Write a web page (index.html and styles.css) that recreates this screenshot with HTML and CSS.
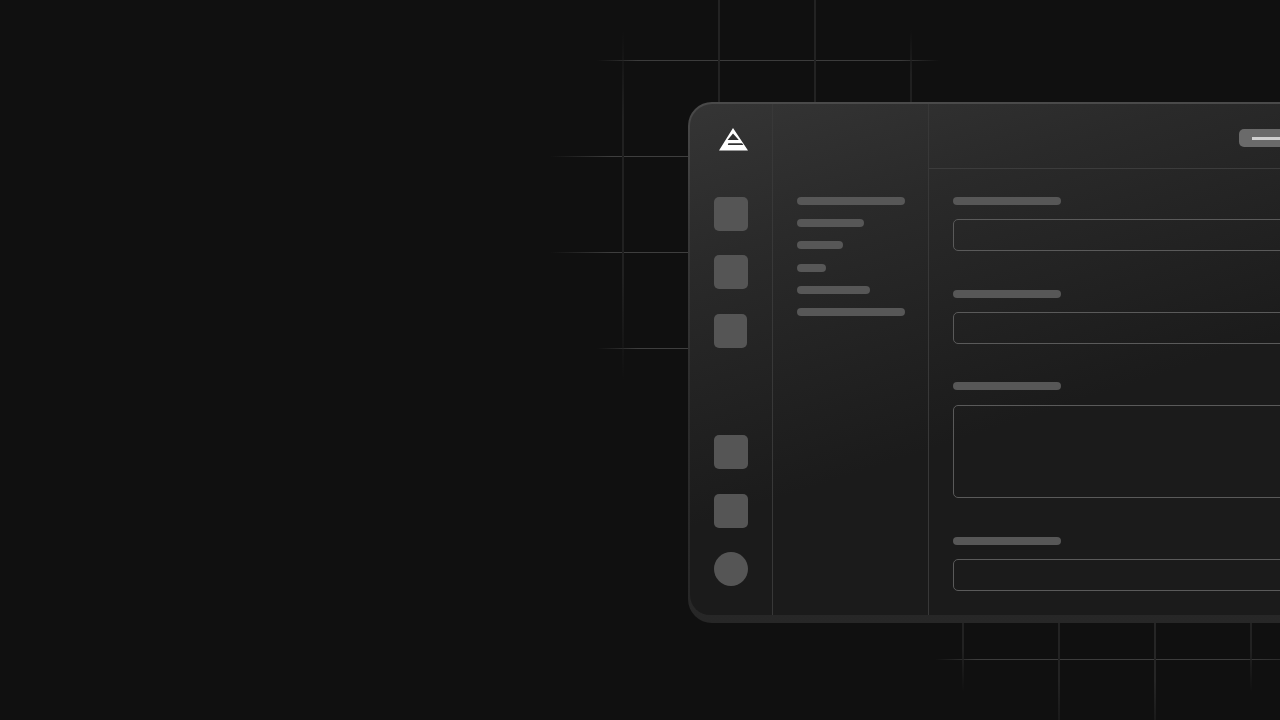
FILE: index.html
```html
<!DOCTYPE html>
<html lang="en">
<head>
<meta charset="utf-8">
<title>App window</title>
<link rel="stylesheet" href="styles.css">
</head>
<body>
<div class="lines" aria-hidden="true">
  <i class="h h60"></i><i class="h h156"></i><i class="h h252"></i><i class="h h348"></i><i class="h h659"></i>
  <i class="v v623"></i><i class="v v719"></i><i class="v v815"></i><i class="v v911"></i>
  <i class="v v963"></i><i class="v v1059"></i><i class="v v1155"></i><i class="v v1251"></i>
</div>
<div class="window">
  <div class="panel">
    <aside class="rail">
      <div class="logo">
        <svg width="30" height="24" viewBox="0 0 30 24"><path fill="#fff" fill-rule="evenodd" d="M14 1 29 23.5H0L14 1ZM14 6.5 8.6 13H19.8L14 6.5ZM9.4 16.2 8.8 18H24.4L23 16.2H9.4Z"/></svg>
      </div>
      <div class="rail-body">
        <div class="rail-group"><span class="tile"></span><span class="tile"></span><span class="tile narrow"></span></div>
        <div class="rail-group"><span class="tile"></span><span class="tile"></span><span class="tile round"></span></div>
      </div>
    </aside>
    <nav class="nav">
      <span class="bar w108"></span><span class="bar w67"></span><span class="bar w46"></span><span class="bar w29"></span><span class="bar w73"></span><span class="bar w108"></span>
    </nav>
    <main class="main">
      <header class="top"><div class="btn"><span class="btn-line"></span></div></header>
      <form class="form">
        <div class="field"><span class="bar w108"></span><div class="input"></div></div>
        <div class="field"><span class="bar w108"></span><div class="input"></div></div>
        <div class="field field-tall"><span class="bar w108"></span><div class="input tall"></div></div>
        <div class="field"><span class="bar w108"></span><div class="input"></div></div>
      </form>
    </main>
  </div>
</div>
</body>
</html>
```
FILE: styles.css
```css
* { box-sizing: border-box; }
html, body { height: 100%; margin: 0; overflow: hidden; }
body {
  position: relative;
  background: #101010;
  padding: 102px 0 0 688px;
}
.lines { position: absolute; inset: 0; }
.h, .v { position: absolute; display: block; }
.h { height: 1px; }
.v { width: 2px; }
.h60 { left: 597px; width: 343px; top: 60px; background: linear-gradient(90deg, transparent, #3c3c3c 12%, #3c3c3c 88%, transparent); }
.h156 { left: 550px; width: 138px; top: 156px; background: linear-gradient(90deg, transparent, #3e3e3e 45%); }
.h252 { left: 550px; width: 138px; top: 252px; background: linear-gradient(90deg, transparent, #3e3e3e 45%); }
.h348 { left: 597px; width: 91px; top: 348px; background: linear-gradient(90deg, transparent, #3e3e3e 45%); }
.h659 { left: 935px; width: 345px; top: 659px; background: linear-gradient(90deg, transparent, #3c3c3c 12%, #3c3c3c 88%, #2c2c2c); }
.v623 { left: 622px; top: 30px; height: 350px; background: linear-gradient(180deg, transparent, #212121 25%, #212121 70%, transparent); }
.v719 { left: 718px; top: 0; height: 104px; background: #232323; }
.v815 { left: 814px; top: 0; height: 104px; background: #232323; }
.v911 { left: 910px; top: 30px; height: 74px; background: linear-gradient(180deg, transparent, #202020 60%); }
.v963 { left: 962px; top: 620px; height: 72px; background: linear-gradient(180deg, #222 40%, transparent); }
.v1059 { left: 1058px; top: 620px; height: 100px; background: linear-gradient(180deg, #232323 60%, #1a1a1a); }
.v1155 { left: 1154px; top: 620px; height: 100px; background: linear-gradient(180deg, #262626 60%, #1a1a1a); }
.v1251 { left: 1250px; top: 620px; height: 72px; background: linear-gradient(180deg, #222 40%, transparent); }

.window {
  position: relative;
  width: 677px;
  height: 521px;
  padding: 2px 0 8px 2px;
  border-radius: 24px 0 0 24px;
  background: linear-gradient(180deg, #4a4a4a 0, #383838 25%, #2c2c2c 60%, #272727 100%);
}
.panel {
  display: flex;
  height: 100%;
  border-radius: 22px 0 0 20px;
  background: linear-gradient(162deg, #353535 0, #2a2a2a 22%, #1b1b1b 58%);
}
.rail {
  flex: 0 0 83px;
  display: flex;
  flex-direction: column;
  border-right: 1px solid #383838;
}
.logo { height: 64px; padding: 23px 0 0 29px; }
.logo svg { display: block; }
.rail-body {
  flex: 1;
  display: flex;
  flex-direction: column;
  justify-content: space-between;
  padding: 29px 0 29px 24.3px;
}
.rail-group { display: flex; flex-direction: column; gap: 24.4px; }
.tile { display: block; width: 34px; height: 34px; border-radius: 5px; background: #555; }
.narrow { width: 33px; }
.round { border-radius: 50%; }
.nav {
  flex: 0 0 156px;
  display: flex;
  flex-direction: column;
  gap: 14.2px;
  padding: 93px 0 0 24px;
  border-right: 1px solid #383838;
}
.bar { display: block; height: 8px; border-radius: 4px; background: #575757; }
.w108 { width: 108px; }
.w67 { width: 67px; }
.w46 { width: 46px; }
.w29 { width: 29px; }
.w73 { width: 73px; }
.main { flex: 1; display: flex; flex-direction: column; }
.top {
  height: 65px;
  padding: 4px 24px 0 0;
  display: flex;
  align-items: center;
  justify-content: flex-end;
  border-bottom: 1px solid #3c3c3c;
}
.btn {
  width: 102px;
  height: 18px;
  padding: 0 13px;
  display: flex;
  align-items: center;
  border-radius: 5px;
  background: #6a6a6a;
}
.btn-line { display: block; flex: 1; height: 3px; background: #cfcfcf; }
.form {
  display: flex;
  flex-direction: column;
  gap: 39px;
  padding: 28px 24px 0;
}
.field { display: flex; flex-direction: column; gap: 14px; }
.field-tall { margin-top: -1px; gap: 15px; }
.input {
  height: 32px;
  border: 1px solid #5a5a5a;
  border-radius: 5px;
}
.tall { height: 93px; }
```
